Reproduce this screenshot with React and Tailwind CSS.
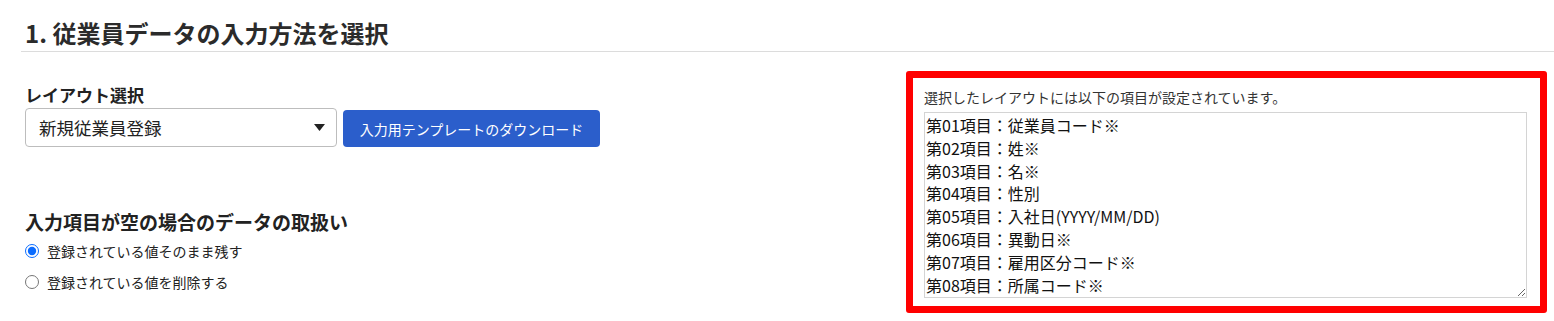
const font = { fontFamily: '"Noto Sans CJK JP", "Liberation Sans", sans-serif' };

const items = [
  "第01項目：従業員コード※",
  "第02項目：姓※",
  "第03項目：名※",
  "第04項目：性別",
  "第05項目：入社日(YYYY/MM/DD)",
  "第06項目：異動日※",
  "第07項目：雇用区分コード※",
  "第08項目：所属コード※",
];

function App() {
  return (
    <div
      className="h-[321px] w-[1554px] overflow-hidden bg-white text-[#333] font-['Noto_Sans_CJK_JP','Liberation_Sans',sans-serif]"
    >
      <div className="pl-[21px]">
        <h2 className="mt-[18px] border-b border-[#dcdcdc] pb-[3px] pl-[4px] text-[24px] font-bold leading-[30px] text-[#2b2b2b]">
          1. 従業員データの入力方法を選択
        </h2>
      </div>

      <div className="flex">
        <div className="w-[906px] pl-[25px] pt-[31px]">
          <h3 className="text-[17px] font-bold leading-[24px] text-[#222]">
            レイアウト選択
          </h3>
          <div className="mt-[1px] flex items-end gap-[6px]">
            <div className="flex h-[39px] w-[312px] items-center justify-between rounded-[4px] border border-[#bdbdbd] bg-white pl-[13px] pr-[9px]">
              <span className="text-[17.5px] leading-none text-[#222]">新規従業員登録</span>
              <svg width="11" height="7" viewBox="0 0 11 7" className="mr-[2px]">
                <path d="M0 0h11L5.5 7z" fill="#222" />
              </svg>
            </div>
            <button className="flex h-[37px] w-[257px] items-center justify-center rounded-[4px] bg-[#2b5ecb] text-[14px] leading-none text-white">
              入力用テンプレートのダウンロード
            </button>
          </div>

          <h3 className="mt-[63px] text-[19px] font-bold leading-[24px] text-[#222]">
            入力項目が空の場合のデータの取扱い
          </h3>
          <div className="mt-[7px] flex flex-col gap-[11px] text-[14px] leading-[20px] text-[#222]">
            <label className="flex items-center gap-[8px]">
              <input
                type="radio"
                name="empty"
                defaultChecked
                className="m-0 h-[14px] w-[14px] accent-[#0b6cff]"
              />
              登録されている値そのまま残す
            </label>
            <label className="flex items-center gap-[8px]">
              <input
                type="radio"
                name="empty"
                className="m-0 h-[14px] w-[14px] accent-[#0b6cff]"
              />
              登録されている値を削除する
            </label>
          </div>
        </div>

        <div className="mt-[19px] h-[242px] w-[641px] rounded-[3px] border-[7px] border-[#ff0000] px-[11px] pt-[9px]">
          <p className="text-[14px] leading-[20px] text-[#333]">
            選択したレイアウトには以下の項目が設定されています。
          </p>
          <textarea
            readOnly
            style={font}
            defaultValue={items.join("\n")}
            className="mt-[5px] block h-[186px] w-[603px] resize border border-[#d4d4d4] px-[1px] pt-[1px] text-[16px] leading-[22.8px] text-[#111] outline-none overflow-hidden"
          />
        </div>
      </div>
    </div>
  );
}

export default App;
